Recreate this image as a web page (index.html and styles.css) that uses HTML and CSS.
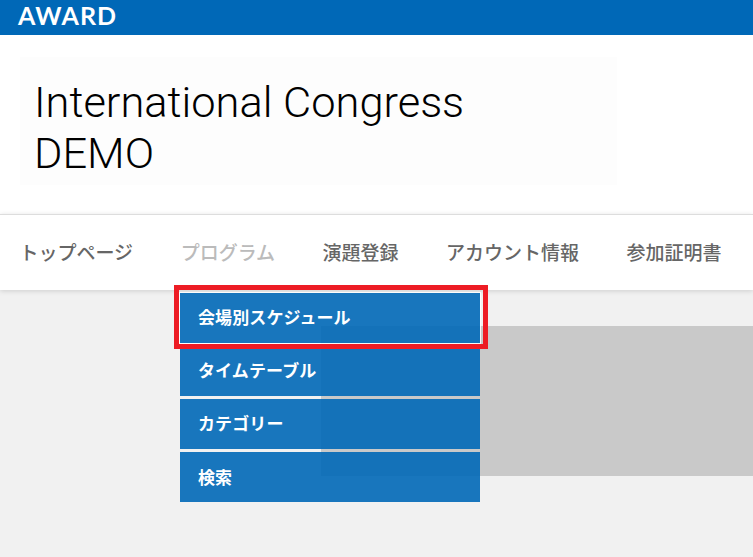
FILE: index.html
```html
<!DOCTYPE html>
<html lang="ja">
<head>
<meta charset="utf-8">
<title>International Congress DEMO</title>
<link rel="stylesheet" href="styles.css">
</head>
<body>
<header class="topbar"><span class="logo">AWARD</span></header>
<section class="brand">
  <div class="brand-card">
    <h1 class="brand-title">International Congress<br>DEMO</h1>
  </div>
</section>
<nav class="nav">
  <a class="nav-item">トップページ</a>
  <a class="nav-item nav-item-active">プログラム</a>
  <a class="nav-item">演題登録</a>
  <a class="nav-item">アカウント情報</a>
  <a class="nav-item">参加証明書</a>
</nav>
<main class="main">
  <div class="banner"></div>
</main>
<ul class="submenu">
  <li class="submenu-item submenu-item-first">会場別スケジュール</li>
  <li class="submenu-item">タイムテーブル</li>
  <li class="submenu-item">カテゴリー</li>
  <li class="submenu-item submenu-item-last">検索</li>
</ul>
<div class="highlight"></div>
</body>
</html>
```
FILE: styles.css
```css
* { box-sizing: border-box; }
html, body { margin: 0; padding: 0; }
body {
  position: relative;
  height: 557px;
  overflow: hidden;
  background: #f1f1f1;
  font-family: "Noto Sans CJK JP", "Noto Sans", sans-serif;
}
.topbar {
  height: 35px;
  background: #0068b7;
  padding-left: 18px;
  display: flex;
  align-items: flex-start;
}
.logo {
  font-family: "Lato", sans-serif;
  font-weight: 700;
  color: #fff;
  font-size: 25px;
  line-height: 31px;
  letter-spacing: 1.1px;
}
.brand {
  height: 179px;
  background: #fff;
  padding: 22px 0 0 20px;
}
.brand-card {
  width: 597px;
  height: 128px;
  background: #fdfdfd;
  padding: 20px 0 0 14px;
}
.brand-title {
  margin: 0;
  font-family: "Roboto", sans-serif;
  font-weight: 300;
  font-size: 43.4px;
  line-height: 51px;
  color: #000;
}
.nav {
  height: 76px;
  background: #fff;
  border-top: 1px solid #ddd;
  box-shadow: 0 1px 5px rgba(0,0,0,.15);
  display: flex;
  gap: 47.5px;
  align-items: center;
  padding: 0 0 2px 19.5px;
  position: relative;
}
.nav-item {
  font-size: 19px;
  font-weight: 500;
  color: #666;
  white-space: nowrap;
}
.nav-item-active { color: #bbb; }
.main { padding: 36px 0 0 321px; }
.banner { height: 150px; background: #c9c9c9; }
.submenu {
  position: absolute;
  left: 180px;
  top: 293px;
  width: 300px;
  margin: 0;
  padding: 0;
  list-style: none;
  display: flex;
  flex-direction: column;
  gap: 3px;
}
.submenu-item {
  height: 50px;
  line-height: 48px;
  padding-left: 18px;
  background: rgba(0,104,183,.9);
  color: #fff;
  font-size: 17px;
  font-weight: 700;
  letter-spacing: .1px;
}
.submenu-item-first { box-shadow: 0 0 0 1px rgba(255,255,255,.85); }
.submenu-item-last { line-height: 50px; }
.highlight {
  position: absolute;
  left: 174px;
  top: 285px;
  width: 314px;
  height: 64px;
  border: 5px solid #ed1c24;
}
```
